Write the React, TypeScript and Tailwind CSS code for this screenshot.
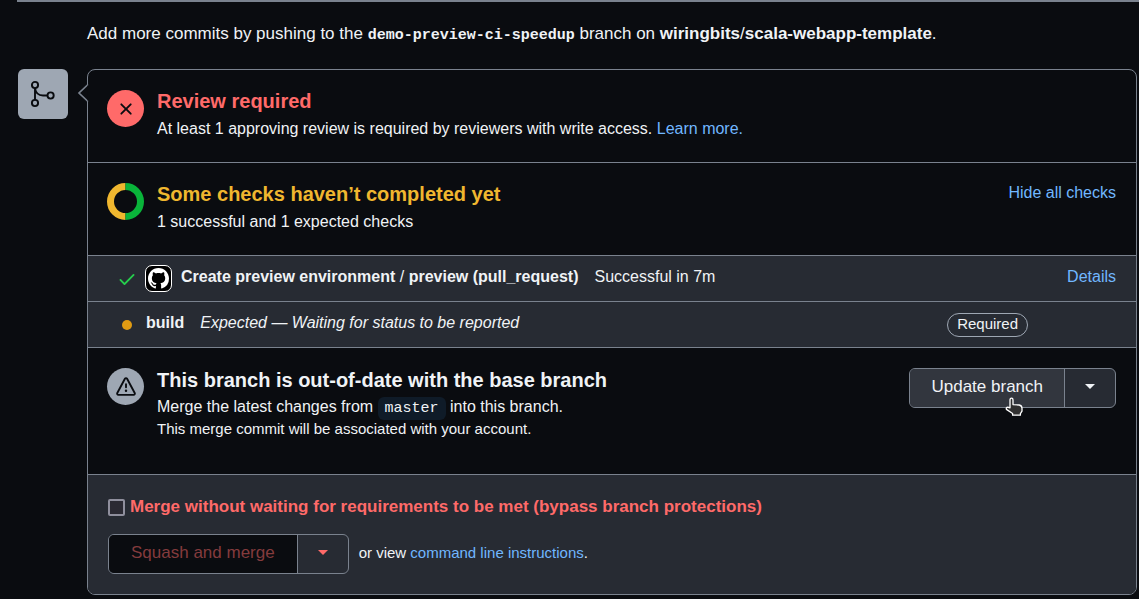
import type { ReactNode } from "react";

function Badge({ className, children }: { className: string; children: ReactNode }) {
  return (
    <span className={"flex size-[37px] shrink-0 items-center justify-center rounded-full " + className}>
      {children}
    </span>
  );
}

function MergeIcon() {
  return (
    <svg width="30" height="30" viewBox="0 0 30 30" fill="none" stroke="#0a0c10" strokeWidth="1.9" aria-hidden="true">
      <circle cx="7" cy="6" r="3.1" />
      <circle cx="7" cy="24" r="3.1" />
      <circle cx="22.6" cy="16.5" r="3.1" />
      <path d="M7 9v12M7 9c.6 4.600 3.400 7.500 8 7.500h4.500" />
    </svg>
  );
}

function CrossIcon() {
  return (
    <svg width="20" height="20" viewBox="0 0 16 16" fill="#0a0c10" aria-hidden="true">
      <path d="M3.720 3.720a.75.75 0 0 1 1.060 0L8 6.940l3.220-3.220a.749.749 0 0 1 1.275.326.749.749 0 0 1-.215.734L9.060 8l3.220 3.220a.749.749 0 0 1-.326 1.275.749.749 0 0 1-.734-.215L8 9.060l-3.220 3.220a.751.751 0 0 1-1.042-.018.751.751 0 0 1-.018-1.042L6.940 8 3.720 4.780a.75.75 0 0 1 0-1.060Z" />
    </svg>
  );
}

function AlertIcon() {
  return (
    <svg width="20" height="20" viewBox="0 0 16 16" fill="#0a0c10" aria-hidden="true">
      <path d="M6.457 1.047c.659-1.234 2.427-1.234 3.086 0l6.082 11.378A1.750 1.750 0 0 1 14.082 15H1.918a1.750 1.750 0 0 1-1.543-2.575Zm1.763.707a.25.25 0 0 0-.44 0L1.698 13.132a.25.25 0 0 0 .22.368h12.164a.25.25 0 0 0 .22-.368Zm.53 3.996v2.500a.75.75 0 0 1-1.500 0v-2.500a.75.75 0 0 1 1.500 0ZM9 11a1 1 0 1 1-2 0 1 1 0 0 1 2 0Z" />
    </svg>
  );
}

function ProgressRing() {
  return (
    <svg className="shrink-0" width="37" height="37" viewBox="0 0 37 37" fill="none" strokeWidth="7" role="img" aria-label="Half of the checks passed">
      <path d="M18.500 3.500a15 15 0 0 0 0 30" stroke="#f0b72f" />
      <path d="M18.500 3.500a15 15 0 0 1 0 30" stroke="#09b43a" />
    </svg>
  );
}

function CheckIcon() {
  return (
    <svg width="20" height="20" viewBox="0 0 16 16" fill="#26cd4d" aria-hidden="true">
      <path d="M13.780 4.220a.75.75 0 0 1 0 1.060l-7.250 7.250a.75.75 0 0 1-1.060 0L2.220 9.280a.751.751 0 0 1 .018-1.042.751.751 0 0 1 1.042-.018L6 10.940l6.720-6.720a.75.75 0 0 1 1.060 0Z" />
    </svg>
  );
}

function GitHubAvatar() {
  return (
    <span className="flex size-[27px] shrink-0 items-center justify-center rounded-[7px] border border-white bg-black">
      <svg width="21" height="21" viewBox="0 0 16 16" fill="#ffffff" aria-hidden="true">
        <path d="M8 0C3.580 0 0 3.580 0 8c0 3.540 2.290 6.530 5.470 7.590.4.070.55-.17.55-.38 0-.19-.01-.82-.01-1.490-2.010.37-2.530-.49-2.690-.94-.09-.23-.48-.94-.82-1.130-.28-.15-.68-.52-.01-.53.63-.01 1.080.58 1.230.82.72 1.210 1.870.87 2.330.66.07-.52.28-.87.51-1.070-1.780-.2-3.640-.89-3.640-3.950 0-.87.31-1.590.82-2.150-.08-.2-.36-1.020.08-2.120 0 0 .67-.21 2.200.82.64-.18 1.320-.27 2-.27s1.360.09 2 .27c1.530-1.040 2.200-.82 2.200-.82.44 1.100.16 1.920.08 2.120.51.56.82 1.270.82 2.150 0 3.070-1.870 3.750-3.650 3.950.29.25.54.73.54 1.480 0 1.070-.01 1.930-.01 2.200 0 .21.15.46.55.38A8.010 8.010 0 0 0 16 8c0-4.420-3.580-8-8-8Z" />
      </svg>
    </span>
  );
}

function Caret({ color }: { color: string }) {
  return (
    <svg width="10" height="5" viewBox="0 0 10 5" fill={color} aria-hidden="true">
      <path d="M0 0h10L5 5Z" />
    </svg>
  );
}

function HandPointer() {
  return (
    <svg className="pointer-events-none absolute top-[28px] left-[95px]" width="18" height="20" viewBox="0 0 18 20" aria-hidden="true">
      <path
        d="M5 3q0-1.800 1.500-1.800T8 3v4.600l6.200.4q2.800.6 2.800 3.200v3l-1.600 2.400v1.600H7.600v-1.700L1.400 12.400q-.6-2 1.400-2.200l2.200.6Z"
        fill="#303030"
        stroke="#ffffff"
        strokeWidth="1.300"
        strokeLinejoin="round"
      />
    </svg>
  );
}

const link = "text-[#71b7ff] hover:underline";

export default function App() {
  return (
    <main className="min-h-screen bg-[#0a0c10] pr-0.5 pl-[17px] font-['Liberation_Sans',Arial,sans-serif] text-base leading-6 text-[#f0f3f6]">
      <hr className="-mr-0.5 h-0.5 border-0 bg-[#7a828e]" />
      <p className="ml-[70px] pt-5 pb-[23px] text-[17px]">
        Add more commits by pushing to the{" "}
        <span className="font-['Liberation_Mono',monospace] text-[15px] leading-none font-bold">demo-preview-ci-speedup</span> branch on{" "}
        <strong>wiringbits</strong>/<strong>scala-webapp-template</strong>.
      </p>
      <div className="flex items-start gap-[19px]">
        <div className="ml-px flex size-[50px] shrink-0 items-center justify-center rounded-md bg-[#9ea7b3]">
          <MergeIcon />
        </div>
        <section className="relative min-w-0 grow rounded-lg border border-[#7a828e]">
          <svg className="absolute top-[13px] -left-[11px]" width="12" height="20" viewBox="0 0 12 20" aria-hidden="true">
            <path d="M11 1.500 2 10l9 8.500" fill="#0a0c10" stroke="#7a828e" strokeWidth="1.700" />
            <path d="M11.200 2.500v15" stroke="#0a0c10" strokeWidth="1.600" />
          </svg>

          <div className="flex gap-[13px] px-[19px] pt-5 pb-[21px]">
            <Badge className="bg-[#ff6a69]">
              <CrossIcon />
            </Badge>
            <div>
              <h3 className="text-xl leading-[22px] font-bold text-[#ff6a69]">Review required</h3>
              <p className="pt-[5px]">
                At least 1 approving review is required by reviewers with write access.{" "}
                <a href="#reviews" className={link}>Learn more.</a>
              </p>
            </div>
          </div>

          <div className="flex gap-[13px] border-t border-[#7a828e] pt-5 pr-5 pb-[21px] pl-[19px]">
            <ProgressRing />
            <div className="grow">
              <h3 className="text-xl leading-[22px] font-bold text-[#f0b72f]">Some checks haven’t completed yet</h3>
              <p className="pt-[5px]">1 successful and 1 expected checks</p>
            </div>
            <button type="button" className={"self-start leading-5 " + link}>Hide all checks</button>
          </div>

          <ul className="bg-[#272b33]">
            <li className="flex h-[46px] items-center border-t border-[#7a828e] pr-5 pl-[29px]">
              <CheckIcon />
              <span className="ml-2 flex"><GitHubAvatar /></span>
              <span className="ml-[9px] pb-1">
                <strong>Create preview environment</strong> / <strong>preview (pull_request)</strong>
              </span>
              <span className="ml-4 grow pb-1">Successful in 7m</span>
              <a href="#details" className={"pb-1 " + link}>Details</a>
            </li>
            <li className="flex h-[46px] items-center border-t border-[#7a828e] pr-[108px] pl-[34px]">
              <span className="size-2.5 rounded-full bg-[#e09b13]" />
              <strong className="ml-[14px] pb-1">build</strong>
              <em className="ml-4 grow pb-1">Expected — Waiting for status to be reported</em>
              <span className="h-6 rounded-full border border-[#9ea7b3] px-[9px] text-[15px] leading-5">Required</span>
            </li>
          </ul>

          <div className="flex gap-[13px] border-t border-[#7a828e] pt-5 pr-5 pb-[35px] pl-[19px]">
            <Badge className="bg-[#9ea7b3]">
              <AlertIcon />
            </Badge>
            <div className="grow">
              <h3 className="text-xl leading-6 font-bold">This branch is out-of-date with the base branch</h3>
              <p className="pt-[3px]">
                Merge the latest changes from{" "}
                <code className="rounded-md bg-[#0f1b28] px-[7px] py-[3px] font-['Liberation_Mono',monospace] text-[15px] leading-none">master</code>{" "}
                into this branch.
              </p>
              <p className="text-[15px] leading-5">This merge commit will be associated with your account.</p>
            </div>
            <div className="relative flex h-10 shrink-0 self-start rounded-md border border-[#7a828e] bg-[#272b33]">
              <button type="button" className="rounded-l-[5px] border-r border-[#7a828e] bg-[#32363e] px-[21px] pb-[3px] text-[17px]">Update branch</button>
              <button type="button" aria-label="Select update method" className="flex w-[50px] items-center justify-center pb-[3px]">
                <Caret color="#f0f3f6" />
              </button>
              <HandPointer />
            </div>
          </div>

          <div className="rounded-b-[7px] border-t border-[#7a828e] bg-[#272b33] p-5">
            <label className="flex items-center gap-[5px] text-[17px] font-bold text-[#ff6a69]">
              <input type="checkbox" className="size-[17px] shrink-0 appearance-none rounded-[2px] border-2 border-[#8f8f9d] bg-[#2b2a33] checked:bg-[#ff6a69]" />
              Merge without waiting for requirements to be met (bypass branch protections)
            </label>
            <div className="flex items-center gap-2.5 pt-[15px]">
              <div className="flex h-10 overflow-hidden rounded-md border border-[#7a828e]">
                <button type="button" disabled className="border-r border-[#7a828e] bg-[#0a0c10] px-[22px] pb-[3px] text-[17px] text-[#843b3d]">Squash and merge</button>
                <button type="button" aria-label="Select merge method" className="flex w-[50px] items-center justify-center pb-[3px]">
                  <Caret color="#ff6a69" />
                </button>
              </div>
              <p className="pb-[3px] text-[15px]">
                or view <a href="#instructions" className={link}>command line instructions</a>.
              </p>
            </div>
          </div>
        </section>
      </div>
    </main>
  );
}
